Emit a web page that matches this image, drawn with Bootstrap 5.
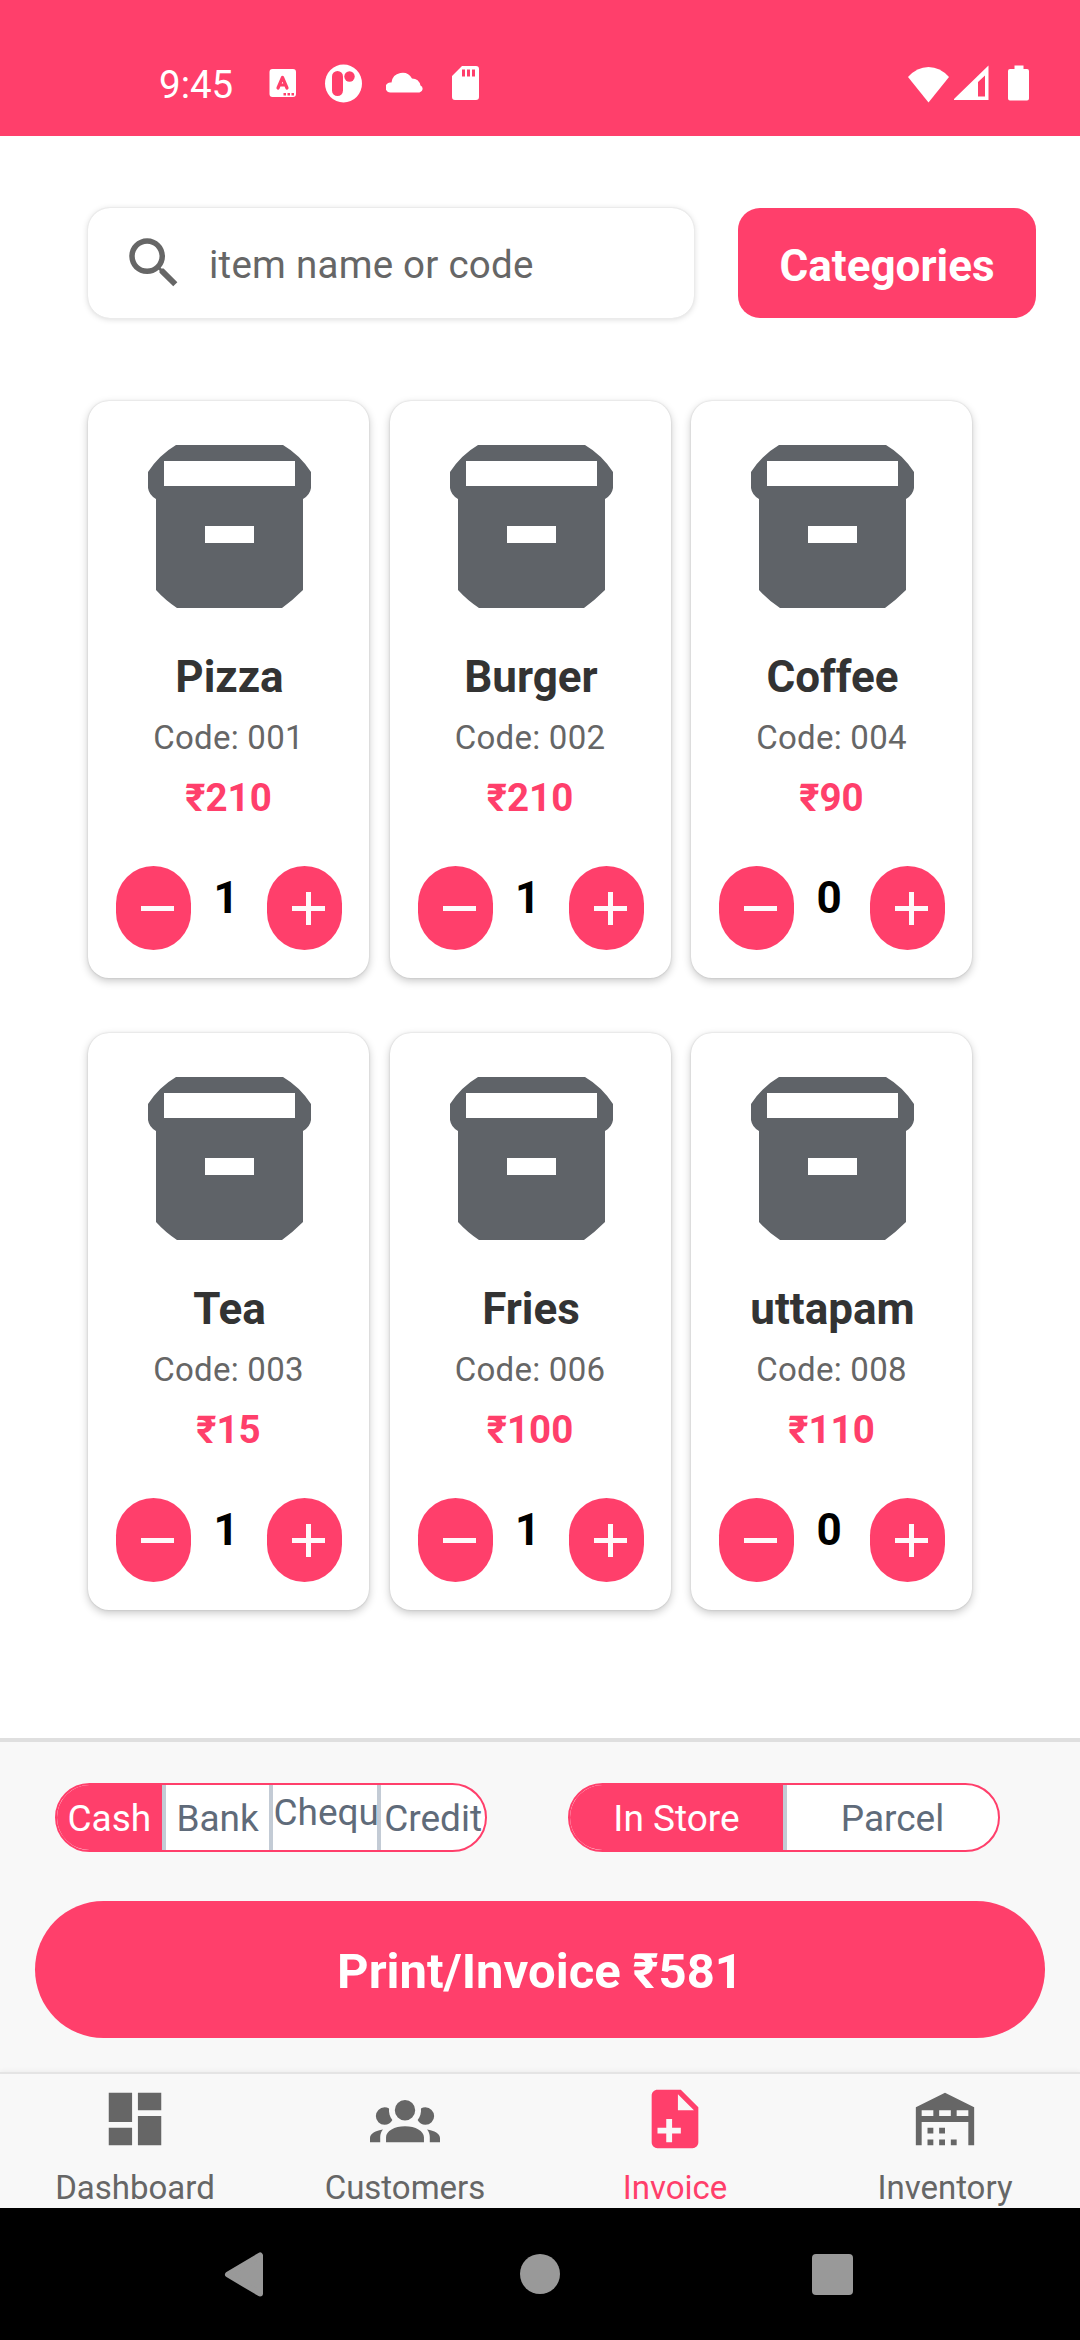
<!DOCTYPE html>
<html lang="en">
<head>
<meta charset="utf-8">
<meta name="viewport" content="width=device-width, initial-scale=1">
<title>Invoice</title>
<link href="https://cdn.jsdelivr.net/npm/bootstrap@5.3.0/dist/css/bootstrap.min.css" rel="stylesheet">
<style>
  :root { --brand: #ff3f6b; --ink: #666; }
  body { width: 1080px; height: 2340px; overflow: hidden; background: #fff; font-family: Roboto, "Noto Sans", sans-serif; color: var(--ink); }
  svg { display: block; flex: none; }
  button { border: 0; padding: 0; font-family: inherit; }
  .bg-brand { background: var(--brand); }
  .status-bar { height: 136px; padding: 62px 50px 0 159px; color: #fff; }
  .clock { font-size: 38.5px; line-height: 46px; width: 108px; }
  .status-bar svg { fill: #fff; }
  .gap-wide { margin-left: 27px; }
  .gap-batt { margin-left: 18px; }

  .catalog { padding: 72px 44px 0 88px; }
  .search-box { width: 606px; height: 110px; border-radius: 22px; padding-left: 33px; box-shadow: 0 0 0 1px #ebebeb, 0 1px 6px rgba(0,0,0,.17); }
  .search-box input { font-size: 38.5px; letter-spacing: .25px; color: var(--ink); background: none; border: 0; outline: 0; width: 440px; margin-left: 22px; padding: 3px 0 0; }
  .search-box input::placeholder { color: var(--ink); opacity: 1; }
  .cat-btn { width: 298px; height: 110px; border-radius: 22px; font-size: 44px; font-weight: 700; padding-top: 6px; color: #fff; }

  .items { margin-top: 83px; column-gap: 20.5px; row-gap: 55px; width: 884px; }
  .item { width: 281px; height: 577px; padding-top: 44px; border-radius: 21px; background: #fff; box-shadow: 0 0 2px rgba(0,0,0,.16), 0 3px 9px rgba(0,0,0,.22); }
  .item-art { margin-left: 60px; }
  .item-name { margin-top: 39px; padding-left: 2px; font-size: 44px; line-height: 60px; font-weight: 700; color: #333; }
  .item-code { font-size: 33px; letter-spacing: .25px; line-height: 62px; }
  .item-price { font-size: 38.5px; line-height: 58px; font-weight: 700; color: var(--brand); }
  .stepper { margin-top: 39px; padding-left: 28px; }
  .step { width: 75px; height: 84px; border-radius: 38px; padding-left: 25px; }
  .qty { width: 70px; margin-right: 6px; font-size: 44px; line-height: 64px; font-weight: 700; color: #000; }

  .pay-panel { height: 334px; background: #f8f8f8; border-top: 4px solid #dfdfdf; padding: 41px 35px 0; }
  .seg-row { padding: 0 45px 0 20px; }
  .seg { width: 432px; height: 69px; border: 2px solid var(--brand); border-radius: 35px; overflow: hidden; background: #fff; font-size: 37px; line-height: 68px; color: #5f6b7a; }
  .seg > div { flex: 1 1 100%; min-width: 0; text-align: center; white-space: nowrap; }
  .seg > div + div { border-left: 4px solid #c3cbd5; }
  .seg .picked { background: var(--brand); color: #fff; }
  .seg .raised { line-height: 56px; }
  .print-btn { margin-top: 49px; height: 137px; border-radius: 69px; color: #fff; font-size: 49px; font-weight: 700; padding-top: 5px; }

  .tabs { height: 136px; background: #f8f8f8; border-top: 2px solid #e4e4e4; box-shadow: 0 -1px 5px rgba(0,0,0,.05); font-size: 33px; padding-top: 10px; position: relative; }
  .tab { width: 270px; }
  .tab svg { width: 70px; height: 70px; fill: currentColor; }
  .tab span { line-height: 44px; margin-top: 12px; }
  .tab.current { color: var(--brand); }
  .sys-nav { height: 132px; background: #000; }
</style>
</head>
<body>
<svg width="0" height="0" style="display:none">
  <symbol id="box" viewBox="0 0 163 163">
    <path fill="#5f6368" fill-rule="evenodd" d="M28 0H135Q152 10 163 27V43Q162 50 155 54V145Q145 155 134 163H29Q17 155 8 145V54Q1 50 0 43V27Q11 10 28 0ZM16 16V41H147V16ZM57 81V98H106V81Z"/>
  </symbol>
  <symbol id="minus" viewBox="0 0 33 33"><path fill="#fff" fill-opacity=".97" d="M0 14H33V19H0z"/></symbol>
  <symbol id="plus" viewBox="0 0 33 33"><path fill="#fff" fill-opacity=".97" d="M0 14H14V0H19V14H33V19H19V33H14V19H0z"/></symbol>
</svg>

<div class="d-flex flex-column h-100">
  <header class="status-bar bg-brand d-flex align-items-start">
    <div class="clock">9:45</div>
    <svg width="30" height="42"><path fill-rule="evenodd" d="M5.500 7H26a3 3 0 0 1 3 3V32a3 3 0 0 1-3 3H5.500a3 3 0 0 1-3-3V10a3 3 0 0 1 3-3Z"/><path d="M11 26L15.500 15.500L20 26M12.500 23H18.500" fill="none" stroke="#ff3f6b" stroke-width="3.200" stroke-linejoin="round" stroke-linecap="round"/><path fill="#ff3f6b" d="M16.500 31h2.500v2.500H16.500zM20.500 31h2.500v2.500H20.500zM24.500 31h2.500v2.500H24.500z"/></svg>
    <svg width="38" height="42" class="gap-wide"><ellipse cx="19.500" cy="21.500" rx="18.500" ry="19"/><rect x="8" y="9" width="11" height="25" rx="5.500" fill="#ff3f6b"/><circle cx="25.500" cy="14.500" r="5.200" fill="#ff3f6b"/></svg>
    <svg width="40" height="42" class="ms-4"><path d="M5 30.500A5 5 0 0 1 4 20.500H5.500A11 11 0 0 1 26 16.500A9 9 0 0 1 34.500 23.500A3.700 3.700 0 0 1 33.500 30.500Z"/></svg>
    <svg width="30" height="42" class="ms-4"><path fill-rule="evenodd" d="M12 4H26a3 3 0 0 1 3 3V35a3 3 0 0 1-3 3H5a3 3 0 0 1-3-3V14ZM12 7.500V14.500H15V7.500ZM17 7.500V14.500H20V7.500ZM22 7.500V14.500H25V7.500Z"/></svg>
    <div class="d-flex ms-auto">
      <svg width="42" height="42"><path d="M0 15Q9 5 20.500 5T41 15L20.500 40.500Z"/></svg>
      <svg width="36" height="42" class="ms-1"><path fill-rule="evenodd" d="M-1 38L34.500 3.500V38ZM31 13.500L24 20V34.500H31Z"/></svg>
      <svg width="22" height="42" class="gap-batt"><path d="M6.500 3.500H15.500V7H19a2 2 0 0 1 2 2V36.500a2 2 0 0 1-2 2H2a2 2 0 0 1-2-2V9A2 2 0 0 1 2 7H6.500Z"/></svg>
    </div>
  </header>

  <main class="catalog flex-grow-1">
    <div class="d-flex justify-content-between">
      <div class="search-box d-flex align-items-center">
        <svg width="66" height="66" viewBox="0 0 24 24" fill="#666"><path d="M15.500 14h-.79l-.28-.27C15.410 12.590 16 11.110 16 9.500 16 5.910 13.090 3 9.500 3S3 5.910 3 9.500 5.910 16 9.500 16c1.610 0 3.090-.59 4.230-1.570l.27.28v.79l5 4.990L20.490 19l-4.990-5zm-6 0C7.010 14 5 11.990 5 9.500S7.010 5 9.500 5 14 7.010 14 9.500 11.990 14 9.500 14z"/></svg>
        <input type="text" placeholder="item name or code">
      </div>
      <button class="cat-btn bg-brand">Categories</button>
    </div>
    <section class="items d-flex flex-wrap text-center" id="items"></section>
  </main>

  <section class="pay-panel">
    <div class="seg-row d-flex justify-content-between">
      <div class="seg d-flex">
        <div class="picked">Cash</div><div>Bank</div><div class="raised">Chequ</div><div>Credit</div>
      </div>
      <div class="seg d-flex"><div class="picked">In Store</div><div>Parcel</div></div>
    </div>
    <button class="print-btn bg-brand w-100 d-block">Print/Invoice ₹581</button>
  </section>

  <nav class="tabs d-flex">
    <div class="tab d-flex flex-column align-items-center"><svg viewBox="0 0 24 24"><path d="M3 13h8V3H3v10zm0 8h8v-6H3v6zm10 0h8V11h-8v10zm0-18v6h8V3h-8z"/></svg><span>Dashboard</span></div>
    <div class="tab d-flex flex-column align-items-center"><svg viewBox="0 0 24 24"><path d="M12,5.500A3.500,3.500 0 0,1 15.500,9A3.500,3.500 0 0,1 12,12.500A3.500,3.500 0 0,1 8.500,9A3.500,3.500 0 0,1 12,5.500M5,8C5.560,8 6.080,8.150 6.530,8.420C6.380,9.850 6.800,11.270 7.660,12.380C7.160,13.340 6.160,14 5,14A3,3 0 0,1 2,11A3,3 0 0,1 5,8M19,8A3,3 0 0,1 22,11A3,3 0 0,1 19,14C17.840,14 16.840,13.340 16.340,12.380C17.200,11.270 17.620,9.850 17.470,8.420C17.920,8.150 18.440,8 19,8M5.500,18.250C5.500,16.180 8.410,14.500 12,14.500C15.590,14.500 18.500,16.180 18.500,18.250V20H5.500V18.250M0,20V18.500C0,17.110 1.890,15.940 4.450,15.600C3.860,16.280 3.500,17.220 3.500,18.250V20H0M24,20H20.500V18.250C20.500,17.220 20.140,16.280 19.550,15.600C22.110,15.940 24,17.110 24,18.500V20Z"/></svg><span>Customers</span></div>
    <div class="tab current d-flex flex-column align-items-center"><svg viewBox="0 0 24 24"><path d="M14 2H6C4.890 2 4 2.890 4 4V20C4 21.110 4.890 22 6 22H18C19.110 22 20 21.110 20 20V8L14 2M13 3.500L18.500 9H13V3.500M14 17H11V20H9V17H6V15H9V12H11V15H14V17Z"/></svg><span>Invoice</span></div>
    <div class="tab d-flex flex-column align-items-center"><svg viewBox="0 0 24 24"><path fill-rule="evenodd" d="M2 21V8L12 3L22 8V21H20V13H4V21ZM4 9V11H8V9ZM10 9V11H14V9ZM16 9V11H20V9ZM6 15H8V17H6ZM10 15H12V17H10ZM6 19H8V21H6ZM10 19H12V21H10ZM14 19H16V21H14Z"/></svg><span>Inventory</span></div>
  </nav>

  <footer class="sys-nav">
    <svg width="1080" height="132" fill="#999"><path d="M228 66.500L260 47.500V85.500Z" stroke="#999" stroke-width="6" stroke-linejoin="round"/><circle cx="540" cy="66" r="20"/><rect x="812" y="46" width="41" height="41" rx="4"/></svg>
  </footer>
</div>

<script src="https://cdn.jsdelivr.net/npm/bootstrap@5.3.0/dist/js/bootstrap.bundle.min.js"></script>
<script>
  const items = [
    ['Pizza', '001', 210, 1], ['Burger', '002', 210, 1], ['Coffee', '004', 90, 0],
    ['Tea', '003', 15, 1], ['Fries', '006', 100, 1], ['uttapam', '008', 110, 0]
  ];
  document.getElementById('items').innerHTML = items.map(([name, code, price, qty]) => `
    <article class="item">
      <svg class="item-art" width="163" height="163"><use href="#box"/></svg>
      <div class="item-name">${name}</div>
      <div class="item-code">Code: ${code}</div>
      <div class="item-price">₹${price}</div>
      <div class="stepper d-flex">
        <button class="step bg-brand"><svg width="33" height="33"><use href="#minus"/></svg></button>
        <div class="qty">${qty}</div>
        <button class="step bg-brand"><svg width="33" height="33"><use href="#plus"/></svg></button>
      </div>
    </article>`).join('');
</script>
</body>
</html>
